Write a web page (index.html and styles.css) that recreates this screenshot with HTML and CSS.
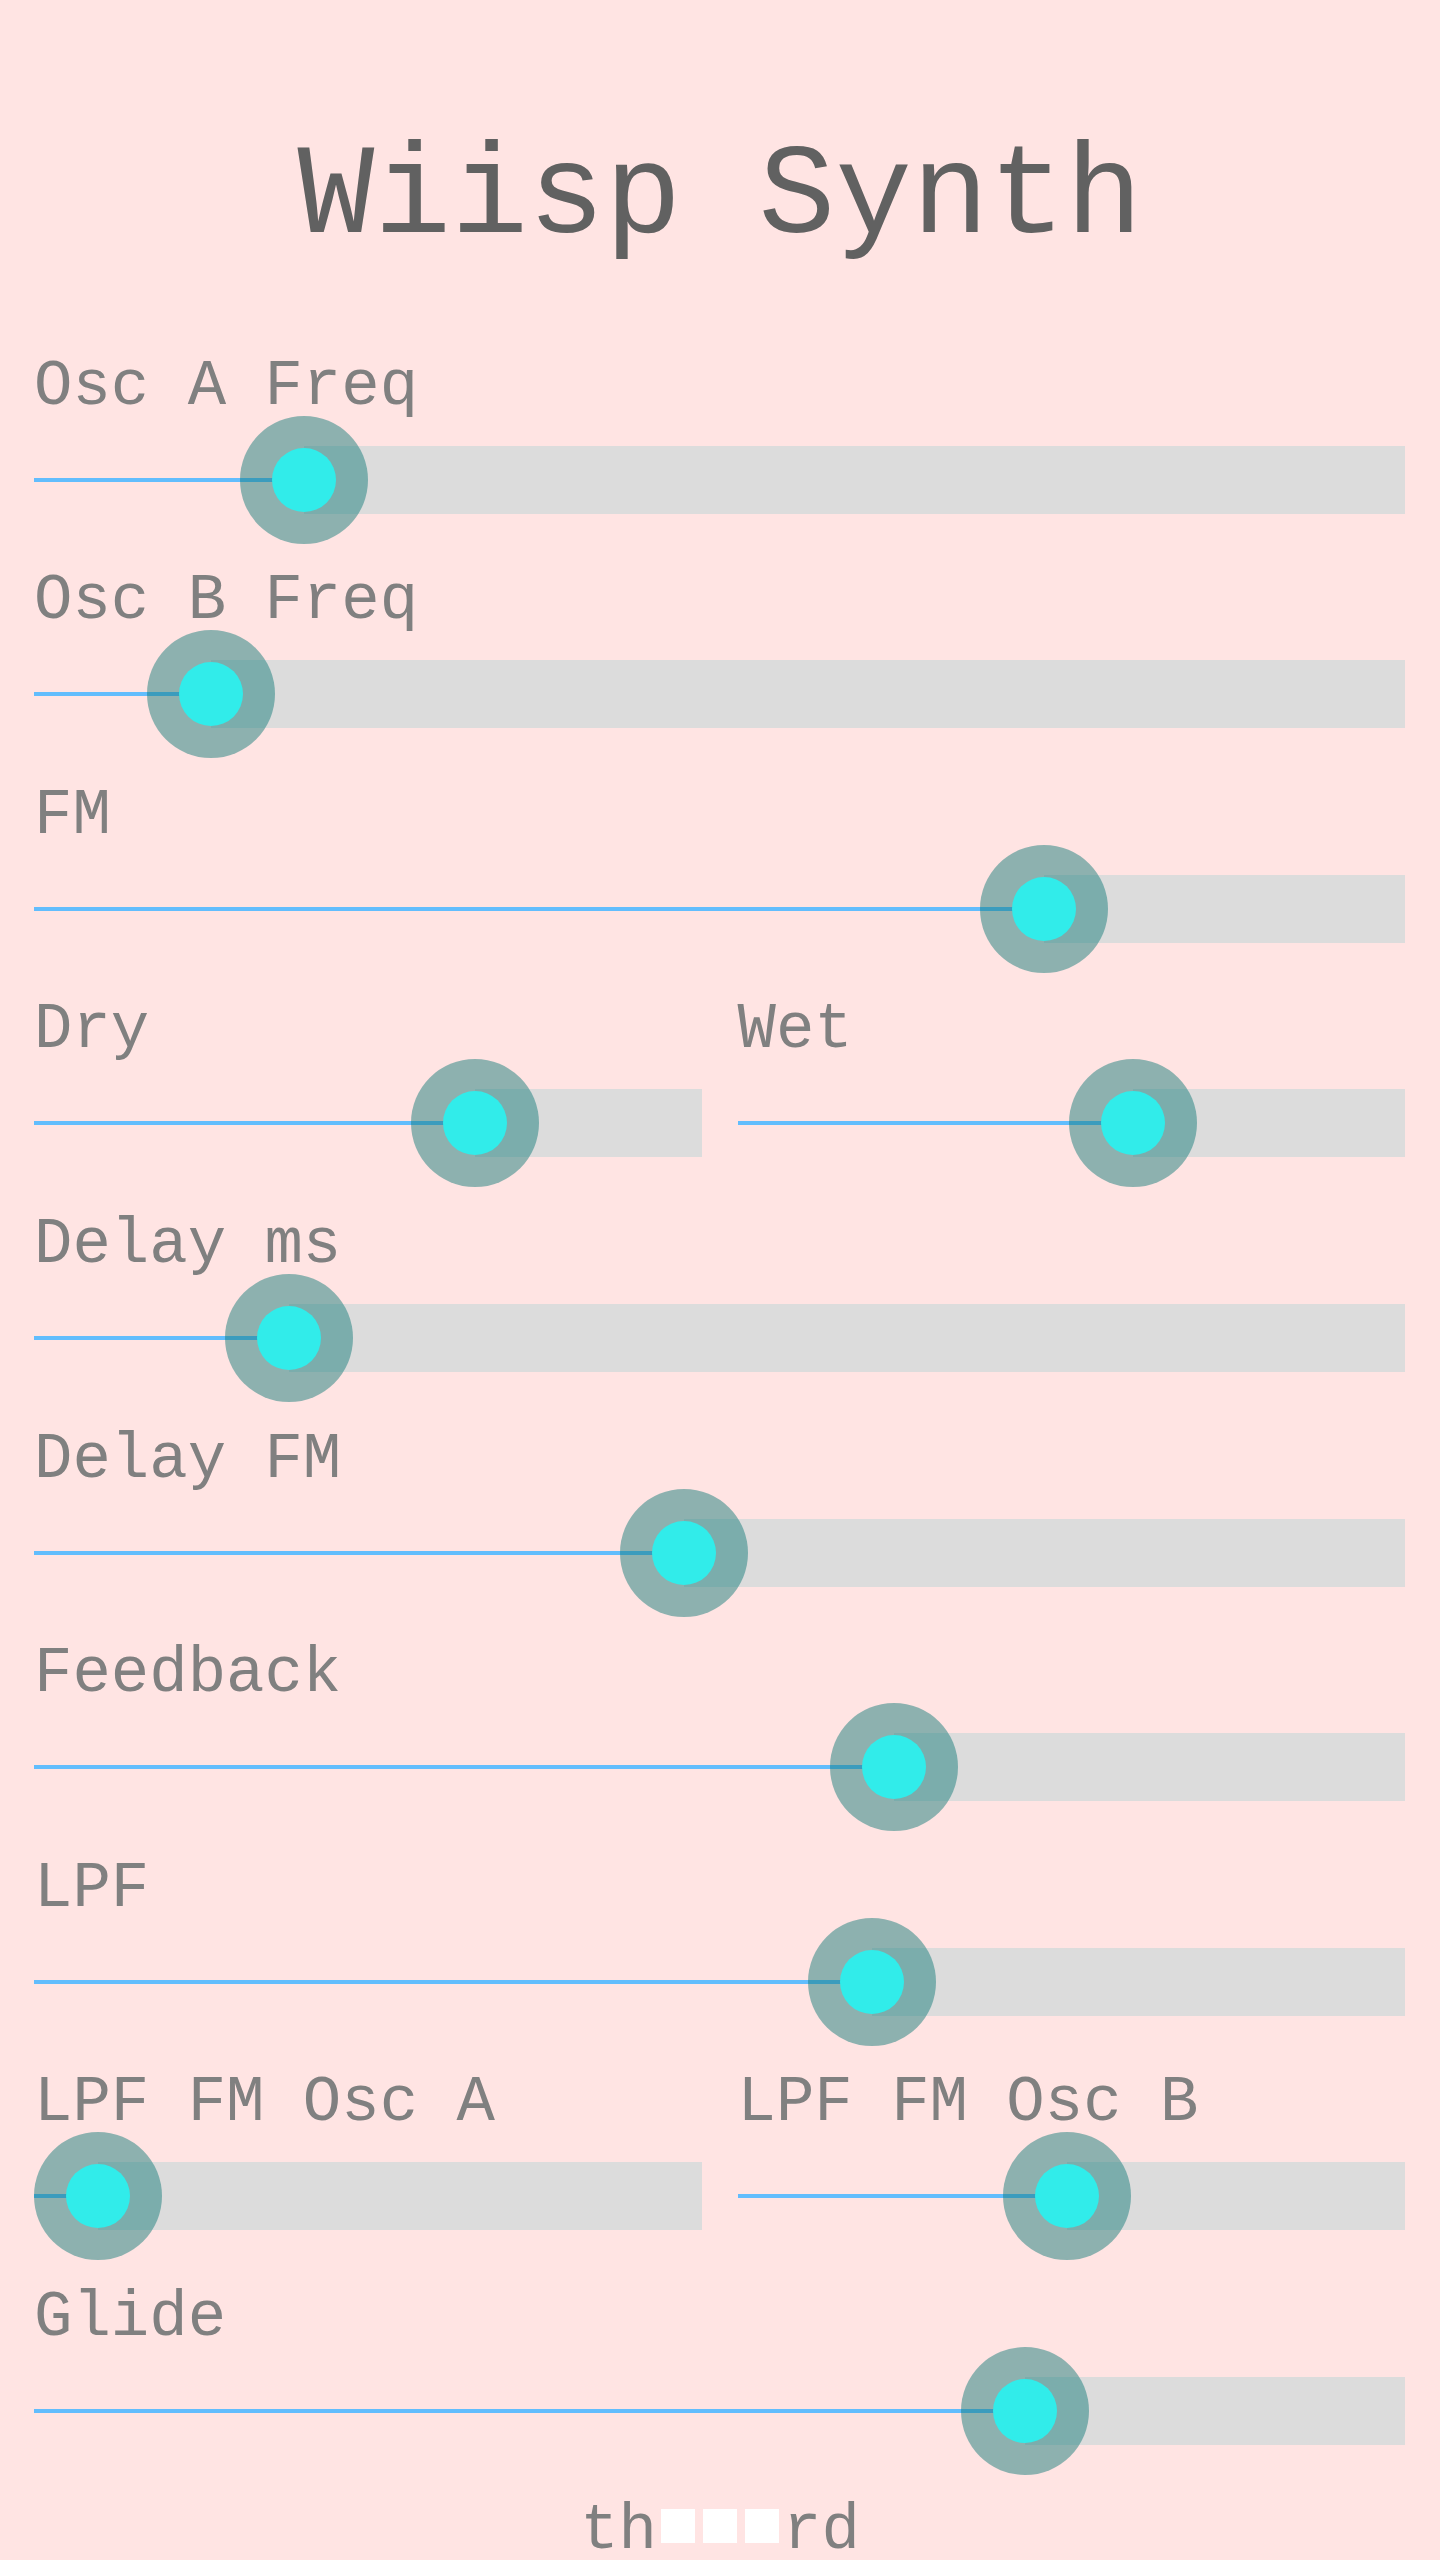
FILE: index.html
```html
<!DOCTYPE html>
<html lang="en">
<head>
    <meta charset="UTF-8">
    <meta name="viewport" content="width=device-width, initial-scale=1.0">
    <title>Wiisp Synth</title>
    <link rel="stylesheet" href="styles.css">
</head>
<body>
    <h1 class="title">Wiisp Synth</h1>

    <main class="controls">
        <div class="control">
            <label class="control-label">Osc A Freq</label>
            <div class="slider">
                <div class="slider-fill" style="width: 19.7%"></div>
                <div class="slider-rest"></div>
                <div class="slider-thumb" style="left: 19.7%"></div>
            </div>
        </div>

        <div class="control">
            <label class="control-label">Osc B Freq</label>
            <div class="slider">
                <div class="slider-fill" style="width: 12.9%"></div>
                <div class="slider-rest"></div>
                <div class="slider-thumb" style="left: 12.9%"></div>
            </div>
        </div>

        <div class="control">
            <label class="control-label">FM</label>
            <div class="slider">
                <div class="slider-fill" style="width: 73.7%"></div>
                <div class="slider-rest"></div>
                <div class="slider-thumb" style="left: 73.7%"></div>
            </div>
        </div>

        <div class="control-pair">
            <div class="control">
                <label class="control-label">Dry</label>
                <div class="slider">
                    <div class="slider-fill" style="width: 66.1%"></div>
                    <div class="slider-rest"></div>
                    <div class="slider-thumb" style="left: 66.1%"></div>
                </div>
            </div>
            <div class="control">
                <label class="control-label">Wet</label>
                <div class="slider">
                    <div class="slider-fill" style="width: 59.2%"></div>
                    <div class="slider-rest"></div>
                    <div class="slider-thumb" style="left: 59.2%"></div>
                </div>
            </div>
        </div>

        <div class="control">
            <label class="control-label">Delay ms</label>
            <div class="slider">
                <div class="slider-fill" style="width: 18.6%"></div>
                <div class="slider-rest"></div>
                <div class="slider-thumb" style="left: 18.6%"></div>
            </div>
        </div>

        <div class="control">
            <label class="control-label">Delay FM</label>
            <div class="slider">
                <div class="slider-fill" style="width: 47.4%"></div>
                <div class="slider-rest"></div>
                <div class="slider-thumb" style="left: 47.4%"></div>
            </div>
        </div>

        <div class="control">
            <label class="control-label">Feedback</label>
            <div class="slider">
                <div class="slider-fill" style="width: 62.7%"></div>
                <div class="slider-rest"></div>
                <div class="slider-thumb" style="left: 62.7%"></div>
            </div>
        </div>

        <div class="control">
            <label class="control-label">LPF</label>
            <div class="slider">
                <div class="slider-fill" style="width: 61.1%"></div>
                <div class="slider-rest"></div>
                <div class="slider-thumb" style="left: 61.1%"></div>
            </div>
        </div>

        <div class="control-pair">
            <div class="control">
                <label class="control-label">LPF FM Osc A</label>
                <div class="slider">
                    <div class="slider-fill" style="width: 9.6%"></div>
                    <div class="slider-rest"></div>
                    <div class="slider-thumb" style="left: 9.6%"></div>
                </div>
            </div>
            <div class="control">
                <label class="control-label">LPF FM Osc B</label>
                <div class="slider">
                    <div class="slider-fill" style="width: 49.4%"></div>
                    <div class="slider-rest"></div>
                    <div class="slider-thumb" style="left: 49.4%"></div>
                </div>
            </div>
        </div>

        <div class="control">
            <label class="control-label">Glide</label>
            <div class="slider">
                <div class="slider-fill" style="width: 72.3%"></div>
                <div class="slider-rest"></div>
                <div class="slider-thumb" style="left: 72.3%"></div>
            </div>
        </div>
    </main>

    <footer class="footer">th<span class="blank"></span><span class="blank"></span><span class="blank"></span>rd</footer>
</body>
</html>
```

FILE: styles.css
```css
body {
    margin: 0;
    background-color: #ffe4e3;
    font-family: 'Liberation Mono', 'Courier New', monospace;
    color: #808080;
    overflow-x: hidden;
}
.title {
    margin: 121px 0 83px;
    font-size: 128px;
    font-weight: normal;
    line-height: 1.2;
    text-align: center;
    color: #616161;
}
.controls {
    display: flex;
    flex-direction: column;
    gap: 28.6px;
    padding: 0 35px 0 34px;
}
.control-pair {
    display: grid;
    grid-template-columns: 1fr 1fr;
    gap: 36px;
}
.control-label {
    display: block;
    font-size: 64px;
    line-height: 58px;
    white-space: nowrap;
}
.slider {
    position: relative;
    display: flex;
    align-items: center;
    height: 128px;
}
.slider-fill {
    height: 4px;
    background-color: #62bdfd;
}
.slider-rest {
    flex: 1;
    height: 68px;
    background-color: #dcdcdc;
}
/* thumb sits over the track */
.slider-thumb {
    position: absolute;
    top: 0;
    width: 128px;
    height: 128px;
    margin-left: -64px;
    border-radius: 50%;
    background-color: rgba(16, 122, 120, 0.48);
    display: flex;
    align-items: center;
    justify-content: center;
}
.slider-thumb::after {
    content: '';
    width: 64px;
    height: 64px;
    border-radius: 50%;
    background-color: #31ecea;
}
.footer {
    margin-top: 24px;
    font-size: 64px;
    line-height: 64px;
    text-align: center;
    white-space: nowrap;
}
.blank {
    display: inline-block;
    width: 34px;
    height: 34px;
    margin: 0 4px;
    vertical-align: 5px;
    background-color: #ffffff;
}
```
